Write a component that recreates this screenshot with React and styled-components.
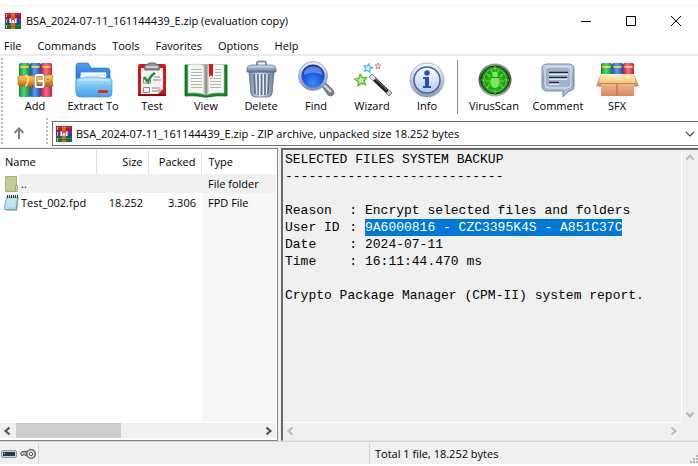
import React from "react";
import styled, { createGlobalStyle, css } from "styled-components";

const GlobalStyle = createGlobalStyle`
  * {
    box-sizing: border-box;
  }
  body {
    margin: 0;
    background-color: #fff;
    color: #000;
    font-family: "Open Sans", "Noto Sans", sans-serif;
    font-size: 11px;
    line-height: 16px;
  }
  button, select {
    font: inherit;
    color: inherit;
    background: none;
    border: 0;
    padding: 0;
    margin: 0;
  }
  svg {
    display: block;
    flex: none;
  }
`;

const Window = styled.div`
  display: flex;
  flex-direction: column;
  min-height: 100vh;
  padding-top: 5px;
`;

const TitleBar = styled.header`
  display: flex;
  align-items: center;
  height: 31px;
  padding-left: 5px;
  gap: 5px;
  border-top: 1px solid #f3f3f3;
`;

const Title = styled.h1`
  flex: 1;
  margin: 0;
  font-size: 11px;
  font-weight: 400;
  white-space: nowrap;
`;

const WindowButtons = styled.div`
  display: flex;
`;

const WindowButton = styled.button`
  display: flex;
  align-items: center;
  justify-content: center;
  width: 45px;
  height: 28px;
`;

const MenuBar = styled.nav`
  display: flex;
  gap: 16px;
  height: 20px;
  padding: 2px 4px 0;
  border-bottom: 2px solid #ececec;
`;

const MenuItem = styled.button`
  line-height: 16px;
`;

const Grip = styled.span`
  flex: none;
  width: 2px;
  align-self: stretch;
  background: repeating-linear-gradient(#bdbdbd 0 2px, transparent 2px 4px);
`;

const ToolBar = styled.div`
  display: flex;
  height: 62px;
  padding: 2px 1px 0;
`;

const ToolGroup = styled.div`
  display: flex;
  padding: 2px 5px 0;
`;

const ToolButton = styled.button`
  display: flex;
  flex-direction: column;
  align-items: center;
  width: ${p => p.$width}px;
  white-space: nowrap;
`;

const ToolDivider = styled.span`
  width: 1px;
  height: 54px;
  margin-top: 2px;
  background-color: #8a8a8a;
`;

const AddressBar = styled.div`
  display: flex;
  height: 30px;
  padding: 0 0 3px 1px;
  border-bottom: 1px solid #ececec;
`;

const UpButton = styled.button`
  display: flex;
  align-items: center;
  width: 43px;
  padding: 3px 0 0 10px;
`;

const AddressBox = styled.label`
  flex: 1;
  display: grid;
  grid-template-columns: 16px 1fr;
  align-items: center;
  gap: 4px;
  height: 25px;
  margin: 3px 0 0 4px;
  padding-left: 3px;
  border: 1px solid #6f6f6f;
  border-right: 0;

  select {
    grid-area: 1 / 2;
    appearance: none;
    width: 100%;
    height: 23px;
    outline: 0;
  }
  svg:last-child {
    grid-area: 1 / 2;
    justify-self: end;
    margin-right: 3px;
    pointer-events: none;
  }
`;

const Panels = styled.main`
  flex: 1;
  display: grid;
  grid-template-columns: 278px 1fr;
  gap: 3px;
  background-color: #f0f0f0;
`;

const FilePanel = styled.section`
  display: flex;
  flex-direction: column;
  min-width: 0;
  padding-right: 1px;
  padding-bottom: 2px;
  border: 1px solid #828790;
  border-left: 0;
  background-color: #fff;
`;

const FileArea = styled.div`
  flex: 1;
  padding-top: 1px;
  background: linear-gradient(to right, #fff 202px, #f7f7f7 202px);
`;

const FileTable = styled.table`
  width: 100%;
  table-layout: fixed;
  border-collapse: collapse;

  th, td {
    padding: 0 5px;
    text-align: left;
    font-weight: 400;
    white-space: nowrap;
  }
  th {
    height: 24px;
    background-color: #fff;
    border-right: 1px solid #e3e3e3;
  }
  th:last-child {
    border-right: 0;
  }
  td {
    height: 19px;
  }
  th:last-child, td:last-child {
    padding-left: 7px;
  }
  th:nth-child(2), th:nth-child(3),
  td:nth-child(2), td:nth-child(3) {
    text-align: right;
  }
`;

const FileRow = styled.tr`
  ${p =>
    p.$active &&
    css`
      background: linear-gradient(to right, #fff 19px, #f0f0f0 19px);
    `}
`;

const FileName = styled.span`
  display: flex;
  align-items: center;
  gap: 2px;
  margin-left: -2px;
`;

const ScrollBar = styled.div`
  display: flex;
  justify-content: space-between;
  background-color: #f0f0f0;
  ${p =>
    p.$vertical
      ? css`
          flex-direction: column;
          width: 17px;
          border-left: 1px solid #fff;
        `
      : css`
          height: 16px;
          border-top: 1px solid #fff;
        `}
`;

const ScrollButton = styled.button`
  display: flex;
  align-items: center;
  justify-content: center;
  width: 16px;
  height: 16px;
  color: ${p => (p.$dim ? "#b9b9b9" : "#4d4d4d")};
`;

const ScrollTrack = styled.div`
  flex: 1;
`;

const ScrollThumb = styled.div`
  width: 43%;
  height: 100%;
  background-color: #cdcdcd;
`;

const CommentPanel = styled.section`
  display: grid;
  grid-template-columns: 1fr auto;
  grid-template-rows: 1fr auto;
  min-width: 0;
  padding-bottom: 2px;
  border-top: 2px solid #696969;
  border-left: 2px solid #696969;
  border-bottom: 1px solid #e3e3e3;
`;

const Report = styled.article`
  padding: 1px 2px;
  font-family: "Liberation Mono", "Courier New", monospace;
  font-size: 13px;
  line-height: 17px;
  white-space: pre;

  p {
    margin: 0;
  }
`;

const Fields = styled.dl`
  display: grid;
  grid-template-columns: 72px 1fr;
  column-gap: 8px;
  justify-items: start;
  margin: 17px 0;

  dt {
    display: flex;
    justify-content: space-between;
    width: 100%;
  }
  dd {
    margin: 0;
  }
`;

const Marked = styled.mark`
  display: block;
  background-color: #0078d7;
  color: #fff;
`;

const StatusBar = styled.footer`
  display: flex;
  height: 25px;
  padding: 2px 0 0;
  background-color: #f0f0f0;
  border-top: 1px solid #d4d4d4;
  border-bottom: 2px solid #fff;
`;

const StatusCell = styled.div`
  display: flex;
  align-items: center;
  flex: ${p => (p.$fill ? "1" : "none")};
  gap: 3px;
  padding-left: ${p => (p.$fill ? 5 : 1)}px;
  padding-right: ${p => (p.$last ? 0 : 2)}px;
  border-right: ${p => (p.$last ? "0" : "1px solid #d4d4d4")};
`;

const Corner = styled.span`
  align-self: flex-end;
  margin-left: auto;
`;

const Fade = ({ id, from, mid, to, across }) => (
  <linearGradient id={id} x1="0" y1="0" x2={across ? 1 : 0} y2={across ? 0 : 1}>
    <stop offset="0" stopColor={from} />
    <stop offset="0.45" stopColor={mid || from} />
    <stop offset="1" stopColor={to} />
  </linearGradient>
);

const ToolIcon = ({ children }) => (
  <svg width="44" height="38" viewBox="0 0 44 38" aria-hidden="true">
    {children}
  </svg>
);

const ArchiveIcon = () => (
  <svg width="16" height="16" viewBox="0 0 16 16" aria-hidden="true">
    <path fill="#b3123c" d="M0 0h16v5H0z" />
    <path fill="#d0315c" d="M1 1h14v1H1z" />
    <path fill="#353a9c" d="M0 5h16v6H0z" />
    <path fill="#4a51bd" d="M1 6h14v1H1z" />
    <path fill="#147038" d="M0 11h16v5H0z" />
    <path fill="#25894a" d="M1 12h14v1H1z" />
    <path fill="#f2c230" d="M1 1h1v3H1zM1 6h1v4H1zM1 12h1v3H1z" />
    <path fill="#e8641b" d="M6 0h4v16H6z" />
    <path fill="#b5470f" d="M6 13h4v1H6z" />
    <path fill="#a9acb8" d="M4 5h8v5H4z" />
    <path fill="#d2521a" d="M6 4h4v4H6z" />
    <path fill="#fff" d="M5 6h1v4H5zM10 6h1v4h-1zM7 7h2v3H7z" />
  </svg>
);

const BookStack = ({ id, height }) => (
  <>
    <defs>
      <Fade id={id + "g"} across from="#0e8d3b" mid="#4fd678" to="#12883b" />
      <Fade id={id + "b"} across from="#1650c8" mid="#5c9df5" to="#1648b5" />
      <Fade id={id + "r"} across from="#c8183a" mid="#ff6a88" to="#c92040" />
    </defs>
    {["g", "b", "r"].map((c, i) => (
      <g key={c} transform={`translate(${6 + i * 11} 3)`}>
        <rect width="11" height={height} rx="1.5" fill={`url(#${id + c})`} />
        <path d="M1.5 3.5q4 1.2 8 0" stroke="#f5d832" strokeWidth="2" fill="none" />
      </g>
    ))}
  </>
);

const AddIcon = () => (
  <ToolIcon>
    <BookStack id="add" height={34} />
    <defs>
      <Fade id="belt" from="#ffd36b" mid="#f2a634" to="#a85c0c" />
    </defs>
    <path d="M5 17q2-2 6-2l10 1 12-1q6-1 7 1l-1 4 1 6q-6 1-12 0l-10 1-9-1-4-1z" fill="url(#belt)" stroke="#9a5a14" strokeWidth="0.6" />
    <path d="M12 15q4 1 3 6t-3 5" fill="none" stroke="#ffe4a0" strokeWidth="1.500" />
    <rect x="22.5" y="15" width="8" height="12" rx="1.5" fill="none" stroke="#666" strokeWidth="3" />
    <rect x="22.5" y="15" width="8" height="12" rx="1.5" fill="none" stroke="#fff" strokeWidth="2" />
    <path d="M25 21h6" stroke="#fff" strokeWidth="2" />
    <path d="M35 19v1M35 23v1M38 21v1" stroke="#70420f" strokeWidth="1" />
  </ToolIcon>
);

const ExtractIcon = () => (
  <ToolIcon>
    <defs>
      <Fade id="fback" from="#4aa0f2" mid="#2c7fe0" to="#2a6fd0" />
      <Fade id="ffront" from="#b5e4ff" mid="#7ac3f8" to="#469fec" />
    </defs>
    <path d="M5 6q0-3 3-3h8q2 0 3 3l1 2h16q3 0 3 3v20H5z" fill="url(#fback)" stroke="#1f66c4" strokeWidth="0.6" />
    <path d="M10 13l1-1 1 1 1-1 1 1 1-1 1 1 1-1 1 1 1-1 1 1 1-1 1 1 1-1 1 1 1-1 1 1 1-1 1 1 1-1 1 1 1-1 1 1 1-1 1 1 1-1v9H9z" fill="#fff" stroke="#cdd9e6" strokeWidth="0.5" />
    <path d="M10 15h26" stroke="#b5c9dd" strokeWidth="1" strokeDasharray="1.5 1" />
    <path d="M5 21q0-3 3-3h4l2-1h14l2 1h8q3 0 3 3v12q0 4-4 4H9q-4 0-4-4z" fill="url(#ffront)" stroke="#3d8fdd" strokeWidth="0.6" />
    <path d="M7 20h31" stroke="#dff4ff" strokeWidth="1" />
    <rect x="27" y="30" width="10" height="3" rx="1" fill="#dc2a24" />
  </ToolIcon>
);

const TestIcon = () => (
  <ToolIcon>
    <rect x="8" y="4" width="28" height="32" rx="2" fill="#d3181c" />
    <path d="M8 35h28" stroke="#8f0d10" strokeWidth="2" />
    <path d="M11 8h22v21l-5 5H11z" fill="#f7f5f4" />
    <path d="M28 34q1-3 0-5 3 1 5 0z" fill="#b5b0ae" />
    <path d="M14 8q0-4 4-4 0-1 4-1t4 1q4 0 4 4l-1 2H15z" fill="#8a8d91" stroke="#505357" strokeWidth="0.8" />
    <path d="M16 7h12" stroke="#dfe2e5" strokeWidth="1.5" />
    <path d="M14 17l4 5q2-6 7-9" fill="none" stroke="#199232" strokeWidth="2.6" />
    <path d="M13.5 17v6h7v-4M13.5 27.5h6v5h-6z" fill="none" stroke="#8a8a8a" />
    <path d="M24 17h6M23 20h8M22 28h8M22 31h6" stroke="#8a8480" strokeWidth="1" />
  </ToolIcon>
);

const ViewIcon = () => (
  <ToolIcon>
    <path d="M1 5h42v31q-10-1-19 1h-4q-9-2-19-1z" fill="#0b8a1f" stroke="#066814" strokeWidth="0.8" />
    <path d="M4 5q11-2 18 1 7-3 18-1v28q-11-1-18 2-7-3-18-2z" fill="#f6f6f2" stroke="#c6c6c0" strokeWidth="0.6" />
    <path d="M19.500 5v28l2.500 2 2.500-2V5L22 6z" fill="#b9b9b3" />
    <path d="M22 6v29" stroke="#73736e" strokeWidth="1" />
    <path
      d="M7 9.500h11M7 12.500h11M7 15.500h11M7 18.500h11M7 21.500h11M7 24.500h11M7 27.500h11M31 9.500h6M31 12.500h6M31 15.500h6M26 18.500h11M26 21.500h11M26 24.500h11M26 27.500h11"
      stroke="#b5b5b0"
      strokeWidth="1"
    />
    <path d="M25 4h4v13l-2-2-2 2z" fill="#cf1b22" />
  </ToolIcon>
);

const DeleteIcon = () => (
  <ToolIcon>
    <defs>
      <Fade id="can" across from="#7489a8" mid="#dbe6f3" to="#6b7f9d" />
      <Fade id="lid" from="#dfe9f5" mid="#9db1cb" to="#5d718f" />
    </defs>
    <path d="M10 12h25l-2 22q-1 3-5 3H17q-4 0-5-3z" fill="url(#can)" stroke="#5b6f8d" strokeWidth="0.8" />
    <path d="M15 14l1 20M19 14v21M22.500 14v21M26 14v21M30 14l-1 20" stroke="#5c6f8b" strokeWidth="1.6" />
    <path d="M17 14l1 20M20.500 14v21M24.500 14v21M28 14l-.5 20" stroke="#f2f7fd" strokeWidth="0.8" />
    <path d="M18 5V3q0-1.500 2-1.500h5q2 0 2 1.500v2" fill="none" stroke="#7f93af" strokeWidth="2" />
    <path d="M8 9q0-4 6-4h17q6 0 6 4v3H8z" fill="url(#lid)" stroke="#5b6f8d" strokeWidth="0.8" />
  </ToolIcon>
);

const FindIcon = () => (
  <ToolIcon>
    <defs>
      <radialGradient id="lens" cx="0.5" cy="0.8" r="0.8">
        <stop offset="0" stopColor="#3d8cff" />
        <stop offset="0.6" stopColor="#1754dc" />
        <stop offset="1" stopColor="#0a2f9e" />
      </radialGradient>
      <Fade id="rim" from="#eef2f7" mid="#b9c3d0" to="#8793a3" />
    </defs>
    <path d="M27 25l4-3 8 8q2 3 0 5t-5 0z" fill="#7b8591" stroke="#4b535e" strokeWidth="0.6" />
    <path d="M30 25l7 7" stroke="#dde3ea" strokeWidth="2" />
    <circle cx="19" cy="16" r="14.500" fill="url(#rim)" stroke="#8391a5" strokeWidth="0.7" />
    <circle cx="19" cy="16" r="11.500" fill="url(#lens)" />
    <path d="M9.500 15Q10 6.500 19 6.500T28.500 15Q19 10 9.500 15z" fill="#9fc4ff" opacity="0.5" />
  </ToolIcon>
);

const star = "M0-5l1.500 3.200 3.500.4-2.600 2.400.8 3.500L0 2.800l-3.200 1.700.8-3.500L-5-1.400l3.500-.4z";

const WizardIcon = () => (
  <ToolIcon>
    <path d={star} transform="translate(11 20) rotate(-8) scale(1.150)" fill="#c9f5a0" stroke="#5dbf35" strokeWidth="1.300" />
    <path d={star} transform="translate(18 8) rotate(12) scale(0.850)" fill="#e3fbff" stroke="#35bede" strokeWidth="1.400" />
    <path d={star} transform="translate(28 6) scale(0.600)" fill="#ffe1e1" stroke="#e86868" strokeWidth="1.500" />
    <path d="M19 17l3-3 20 19-3 3z" fill="#222" />
    <path d="M19 17l3-3 4 4-3 3z" fill="#dcdcdc" stroke="#777" strokeWidth="0.6" />
    <path d="M36 33l3-3 3 3-3 3z" fill="#c4c4c4" stroke="#666" strokeWidth="0.6" />
    <path d="M25 18.500l12 11.500" stroke="#8a8a8a" strokeWidth="1" />
  </ToolIcon>
);

const InfoIcon = () => (
  <ToolIcon>
    <defs>
      <Fade id="iring" from="#f6f9fd" mid="#c6d0dd" to="#8c99ab" />
      <Fade id="idisc" from="#fff" mid="#dbe7fa" to="#b4cbf0" />
    </defs>
    <circle cx="22" cy="20" r="17" fill="url(#iring)" stroke="#8e9bad" strokeWidth="0.7" />
    <circle cx="22" cy="20" r="13" fill="url(#idisc)" stroke="#3c62bd" strokeWidth="1.500" />
    <circle cx="22" cy="13" r="2.700" fill="#2450bd" />
    <path d="M18 17h6v9h2v2h-8v-2h2v-7h-2z" fill="#2450bd" />
  </ToolIcon>
);

const VirusIcon = () => (
  <ToolIcon>
    <defs>
      <Fade id="vring" from="#9a9a9a" mid="#4c4c4c" to="#b7b7b7" />
      <radialGradient id="vdisc">
        <stop offset="0" stopColor="#3fcf28" />
        <stop offset="1" stopColor="#148a0d" />
      </radialGradient>
    </defs>
    <circle cx="23" cy="20" r="16.500" fill="url(#vring)" />
    <circle cx="23" cy="20" r="14" fill="url(#vdisc)" stroke="#073f05" strokeWidth="1" />
    <g fill="none" stroke="#6ddf4b" strokeWidth="0.8">
      <circle cx="23" cy="20" r="11.500" />
      <path d="M23 6v5M23 29v5M9 20h5M32 20h5" />
      <path strokeWidth="1.200" d="M18 17l-3-3M28 17l3-3M18 21h-4M28 21h4M18 24l-3 4M28 24l3 4M21 13l-2-3M25 13l2-3" />
    </g>
    <ellipse cx="23" cy="22" rx="4.500" ry="6" fill="#7fe95c" />
    <circle cx="23" cy="14.500" r="2.700" fill="#7fe95c" />
    <path d="M18 17.500h10" stroke="#1c9a12" strokeWidth="1" />
  </ToolIcon>
);

const CommentIcon = () => (
  <ToolIcon>
    <defs>
      <Fade id="bubble" from="#c9d6e6" mid="#8aa0bd" to="#b8c8dc" />
    </defs>
    <path d="M11 4h22q5 0 5 5v17q0 5-5 5l-6 6v-6H11q-5 0-5-5V9q0-5 5-5z" fill="url(#bubble)" stroke="#7389a8" />
    <rect x="9" y="7" width="26" height="21" rx="4" fill="#9fb3cc" stroke="#e4edf7" strokeWidth="1" />
    <path d="M13 13h19M13 18h18M13 23h10" stroke="#f2f6fb" strokeWidth="1.500" transform="translate(0 1)" />
    <path d="M13 12.500h19M13 17.500h18M13 22.500h10" stroke="#1e2a3b" strokeWidth="1.500" />
  </ToolIcon>
);

const SfxIcon = () => (
  <ToolIcon>
    <BookStack id="sfx" height={12} />
    <defs>
      <Fade id="carton" from="#e9a478" mid="#f0b48c" to="#d8885a" />
      <Fade id="flap" from="#fff0c0" mid="#fbe2a4" to="#eec27e" />
    </defs>
    <path d="M6 14h33v22H6z" fill="url(#carton)" />
    <path d="M22 22v14" stroke="#bb6c42" strokeWidth="1" />
    <path d="M6 14l-5 12 5 1zM39 14l5 12-5 1z" fill="#d98f64" />
    <path d="M6 14h33l2 9H4z" fill="url(#flap)" />
    <path d="M4 23.500h37" stroke="#c78351" strokeWidth="1" />
  </ToolIcon>
);

const chevrons = {
  left: "M6.500 1.500L2.500 5l4 3.500",
  right: "M3.500 1.500l4 3.500-4 3.500",
  up: "M1.500 6.500L5 2.500l3.500 4",
  down: "M1.500 3.500L5 7.500l3.500-4"
};

const Chevron = ({ dir }) => (
  <svg width="10" height="10" viewBox="0 0 10 10" aria-hidden="true">
    <path d={chevrons[dir]} fill="none" stroke="currentColor" strokeWidth="2" />
  </svg>
);

const FolderIcon = () => (
  <svg width="16" height="16" viewBox="0 0 16 16" aria-hidden="true">
    <path d="M2.500.5h11v15h-11z" fill="#c5cb94" stroke="#a9ae6c" />
    <path d="M12.500 9.500h2v6h-2z" fill="#d5d9ad" stroke="#a9ae6c" />
  </svg>
);

const NotepadIcon = () => (
  <svg width="16" height="16" viewBox="0 0 16 16" aria-hidden="true">
    <path d="M4 3h11.500L14 15.500H3z" fill="#8a7a5c" />
    <path d="M3.500 2H15l-2 12.500H1z" fill="#a9dcec" stroke="#5aa5bd" strokeWidth="0.7" />
    <path d="M4 5h9M3.700 7h9M3.300 9h9M3 11h9" stroke="#e6f8fd" strokeWidth="0.8" />
    <path d="M4.500 0v3M6.500 0v3M8.500 0v3M10.500 0v3M12.500 0v3M14.500 0v3" stroke="#333" strokeWidth="1" />
  </svg>
);

const DriveIcon = () => (
  <svg width="16" height="12" viewBox="0 0 16 12" aria-hidden="true">
    <rect x="0.5" y="2.500" width="15" height="7" rx="1.500" fill="#c2d5e2" stroke="#7d9cb2" />
    <rect x="2" y="4" width="12" height="4" fill="#30363c" />
    <path d="M3 5h1v1H3z" fill="#fff" />
  </svg>
);

const KeyIcon = () => (
  <svg width="16" height="12" viewBox="0 0 16 12" aria-hidden="true">
    <path d="M7 3.500H2L.5 5.500l1 2H3l1-1 1 1h2z" fill="#a9b2b2" stroke="#505757" strokeWidth="1" />
    <circle cx="11" cy="6" r="4.300" fill="#dfe3e3" stroke="#505757" strokeWidth="1.300" />
    <circle cx="11" cy="6" r="1.700" fill="#fff" stroke="#505757" />
  </svg>
);

const ResizeGrip = () => (
  <svg width="9" height="9" viewBox="0 0 9 9" aria-hidden="true">
    <path fill="#b5b5b5" d="M7 0h2v2H7zM4 3h2v2H4zM7 3h2v2H7zM1 6h2v2H1zM4 6h2v2H4zM7 6h2v2H7z" />
  </svg>
);

const menus = ["File", "Commands", "Tools", "Favorites", "Options", "Help"];

const archiveTools = [
  { label: "Add", width: 54, Icon: AddIcon },
  { label: "Extract To", width: 62, Icon: ExtractIcon },
  { label: "Test", width: 56, Icon: TestIcon },
  { label: "View", width: 52, Icon: ViewIcon },
  { label: "Delete", width: 58, Icon: DeleteIcon },
  { label: "Find", width: 52, Icon: FindIcon },
  { label: "Wizard", width: 60, Icon: WizardIcon },
  { label: "Info", width: 50, Icon: InfoIcon }
];

const extraTools = [
  { label: "VirusScan", width: 62, Icon: VirusIcon },
  { label: "Comment", width: 66, Icon: CommentIcon },
  { label: "SFX", width: 52, Icon: SfxIcon }
];

const files = [
  { name: "..", size: "", packed: "", type: "File folder", Icon: FolderIcon },
  { name: "Test_002.fpd", size: "18.252", packed: "3.306", type: "FPD File", Icon: NotepadIcon }
];

const fields = [
  { label: "Reason", value: "Encrypt selected files and folders" },
  { label: "User ID", value: "9A6000816 - CZC3395K4S - A851C37C", marked: true },
  { label: "Date", value: "2024-07-11" },
  { label: "Time", value: "16:11:44.470 ms" }
];

const Tools = ({ items }) => (
  <ToolGroup>
    {items.map(({ label, width, Icon }) => (
      <ToolButton key={label} $width={width}>
        <Icon />
        {label}
      </ToolButton>
    ))}
  </ToolGroup>
);

const FileList = () => (
  <FilePanel>
    <FileArea>
      <FileTable>
        <colgroup>
          <col width="96" />
          <col width="52" />
          <col width="53" />
          <col />
        </colgroup>
        <thead>
          <tr>
            <th>Name</th>
            <th>Size</th>
            <th>Packed</th>
            <th>Type</th>
          </tr>
        </thead>
        <tbody>
          {files.map(({ name, size, packed, type, Icon }, i) => (
            <FileRow key={name} $active={i === 0}>
              <td>
                <FileName>
                  <Icon />
                  {name}
                </FileName>
              </td>
              <td>{size}</td>
              <td>{packed}</td>
              <td>{type}</td>
            </FileRow>
          ))}
        </tbody>
      </FileTable>
    </FileArea>
    <ScrollBar>
      <ScrollButton aria-label="Scroll left">
        <Chevron dir="left" />
      </ScrollButton>
      <ScrollTrack>
        <ScrollThumb />
      </ScrollTrack>
      <ScrollButton aria-label="Scroll right">
        <Chevron dir="right" />
      </ScrollButton>
    </ScrollBar>
  </FilePanel>
);

const ArchiveComment = () => (
  <CommentPanel>
    <Report>
      <p>SELECTED FILES SYSTEM BACKUP</p>
      <p>----------------------------</p>
      <Fields>
        {fields.map(({ label, value, marked }) => (
          <React.Fragment key={label}>
            <dt>
              {label}
              <span>:</span>
            </dt>
            <dd>{marked ? <Marked>{value}</Marked> : value}</dd>
          </React.Fragment>
        ))}
      </Fields>
      <p>Crypto Package Manager (CPM-II) system report.</p>
    </Report>
    <ScrollBar $vertical>
      <ScrollButton $dim aria-label="Scroll up">
        <Chevron dir="up" />
      </ScrollButton>
      <ScrollButton $dim aria-label="Scroll down">
        <Chevron dir="down" />
      </ScrollButton>
    </ScrollBar>
    <ScrollBar>
      <ScrollButton $dim aria-label="Scroll left">
        <Chevron dir="left" />
      </ScrollButton>
      <ScrollButton $dim aria-label="Scroll right">
        <Chevron dir="right" />
      </ScrollButton>
    </ScrollBar>
  </CommentPanel>
);

const App = () => (
  <>
    <GlobalStyle />
    <Window>
      <TitleBar>
        <ArchiveIcon />
        <Title>BSA_2024-07-11_161144439_E.zip (evaluation copy)</Title>
        <WindowButtons>
          <WindowButton aria-label="Minimize">
            <svg width="10" height="10">
              <path d="M0 5.500h10" stroke="#000" />
            </svg>
          </WindowButton>
          <WindowButton aria-label="Maximize">
            <svg width="10" height="10">
              <path d="M.5.5h9v9h-9z" fill="none" stroke="#000" />
            </svg>
          </WindowButton>
          <WindowButton aria-label="Close">
            <svg width="10" height="10">
              <path d="M0 0l10 10M10 0L0 10" stroke="#000" />
            </svg>
          </WindowButton>
        </WindowButtons>
      </TitleBar>
      <MenuBar>
        {menus.map(menu => (
          <MenuItem key={menu}>{menu}</MenuItem>
        ))}
      </MenuBar>
      <ToolBar>
        <Grip />
        <Tools items={archiveTools} />
        <ToolDivider />
        <Tools items={extraTools} />
      </ToolBar>
      <AddressBar>
        <Grip />
        <UpButton aria-label="Up one level">
          <svg width="12" height="12" viewBox="0 0 12 12">
            <path d="M6 12V2M1.500 6L6 1.500 10.500 6" fill="none" stroke="#808080" strokeWidth="2" />
          </svg>
        </UpButton>
        <Grip />
        <AddressBox>
          <ArchiveIcon />
          <select aria-label="Address">
            <option>BSA_2024-07-11_161144439_E.zip - ZIP archive, unpacked size 18.252 bytes</option>
          </select>
          <svg width="10" height="6" viewBox="0 0 10 6">
            <path d="M1 1l4 4 4-4" fill="none" stroke="#444" strokeWidth="1.200" />
          </svg>
        </AddressBox>
      </AddressBar>
      <Panels>
        <FileList />
        <ArchiveComment />
      </Panels>
      <StatusBar>
        <StatusCell>
          <DriveIcon />
          <KeyIcon />
        </StatusCell>
        <StatusCell $fill />
        <StatusCell $fill $last>
          Total 1 file, 18.252 bytes
          <Corner>
            <ResizeGrip />
          </Corner>
        </StatusCell>
      </StatusBar>
    </Window>
  </>
);

export default App;
